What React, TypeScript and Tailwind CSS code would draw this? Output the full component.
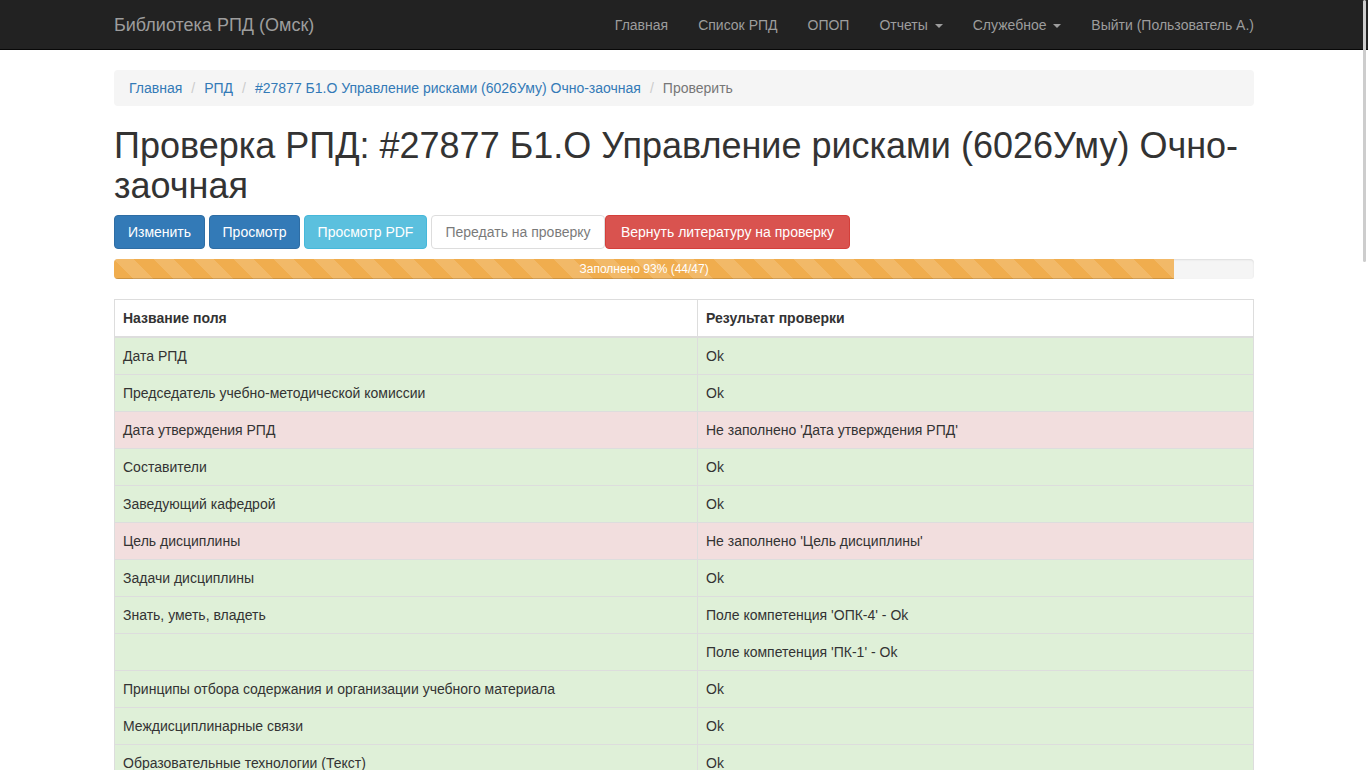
import React from "react";

type Row = {
  name: string;
  result: string;
  bad?: boolean;
};

const rows: Row[] = [
  { name: "Дата РПД", result: "Ok" },
  { name: "Председатель учебно-методической комиссии", result: "Ok" },
  { name: "Дата утверждения РПД", result: "Не заполнено 'Дата утверждения РПД'", bad: true },
  { name: "Составители", result: "Ok" },
  { name: "Заведующий кафедрой", result: "Ok" },
  { name: "Цель дисциплины", result: "Не заполнено 'Цель дисциплины'", bad: true },
  { name: "Задачи дисциплины", result: "Ok" },
  { name: "Знать, уметь, владеть", result: "Поле компетенция 'ОПК-4' - Ok" },
  { name: "", result: "Поле компетенция 'ПК-1' - Ok" },
  { name: "Принципы отбора содержания и организации учебного материала", result: "Ok" },
  { name: "Междисциплинарные связи", result: "Ok" },
  { name: "Образовательные технологии (Текст)", result: "Ok" },
  { name: "Образовательные технологии (Таблица)", result: "Ok" },
  { name: "Место дисциплины в структуре ОПОП", result: "Ok" },
];

const Caret = () => (
  <span className="ml-[3px] inline-block h-0 w-0 border-x-[4px] border-t-[4px] border-x-transparent border-t-[#9d9d9d] align-middle" />
);

const NavLink = ({ children }: { children: React.ReactNode }) => (
  <a className="block px-[15px] py-[15px] text-[14px] leading-[20px] text-[#9d9d9d]">
    {children}
  </a>
);

const Sep = () => <li className="px-[9px] text-[#ccc]">/</li>;

export default function App() {
  return (
    <div
      className="relative h-[770px] overflow-hidden bg-white text-[14px] leading-[20px] text-[#333]"
      style={{ fontFamily: '"Liberation Sans", Arial, sans-serif' }}
    >
      <nav className="h-[50px] border-b border-[#080808] bg-[#222]">
        <div className="mx-auto flex w-[1170px] items-center justify-between px-[15px]">
          <a className="-ml-[15px] block px-[15px] py-[15px] text-[18px] leading-[20px] text-[#9d9d9d]">
            Библиотека РПД (Омск)
          </a>
          <div className="-mr-[15px] flex">
            <NavLink>Главная</NavLink>
            <NavLink>Список РПД</NavLink>
            <NavLink>ОПОП</NavLink>
            <NavLink>
              Отчеты <Caret />
            </NavLink>
            <NavLink>
              Служебное <Caret />
            </NavLink>
            <NavLink>Выйти (Пользователь А.)</NavLink>
          </div>
        </div>
      </nav>

      <div className="mx-auto w-[1170px] px-[15px] pt-[20px]">
        <ol className="flex rounded-[4px] bg-[#f5f5f5] px-[15px] py-[8px]">
          <li className="text-[#337ab7]">Главная</li>
          <Sep />
          <li className="text-[#337ab7]">РПД</li>
          <Sep />
          <li className="text-[#337ab7]">#27877 Б1.О Управление рисками (6026Уму) Очно-заочная</li>
          <Sep />
          <li className="text-[#777]">Проверить</li>
        </ol>

        <h1 className="mt-[20px] mb-[10px] text-[36px] leading-[39.6px] font-normal text-[#333]">
          Проверка РПД: #27877 Б1.О Управление рисками (6026Уму) Очно-заочная
        </h1>

        <div className="mb-[10px] flex">
          <button className="mr-[4px] w-[91px] rounded-[4px] border border-[#2e6da4] bg-[#337ab7] py-[6px] text-white">
            Изменить
          </button>
          <button className="mr-[4px] w-[91px] rounded-[4px] border border-[#2e6da4] bg-[#337ab7] py-[6px] text-white">
            Просмотр
          </button>
          <button className="mr-[4px] w-[123px] rounded-[4px] border border-[#46b8da] bg-[#5bc0de] py-[6px] text-white">
            Просмотр PDF
          </button>
          <button className="w-[174px] rounded-[4px] border border-[#ccc] bg-white py-[6px] text-[#333] opacity-65">
            Передать на проверку
          </button>
          <button className="w-[245px] rounded-[4px] border border-[#d43f3a] bg-[#d9534f] py-[6px] text-white">
            Вернуть литературу на проверку
          </button>
        </div>

        <div className="mb-[20px] h-[20px] overflow-hidden rounded-[4px] bg-[#f5f5f5] shadow-[inset_0_1px_2px_rgba(0,0,0,0.1)]">
          <div className="h-full w-[93%] bg-[#f0ad4e] bg-[linear-gradient(45deg,rgba(255,255,255,.15)_25%,transparent_25%,transparent_50%,rgba(255,255,255,.15)_50%,rgba(255,255,255,.15)_75%,transparent_75%,transparent)] bg-[length:40px_40px] text-center text-[12px] leading-[20px] text-white shadow-[inset_0_-1px_0_rgba(0,0,0,0.15)]">
            Заполнено 93% (44/47)
          </div>
        </div>

        <table className="w-full border-collapse border border-[#ddd]">
          <thead>
            <tr>
              <th className="w-[583px] border border-b-2 border-[#ddd] p-[8px] text-left font-bold">
                Название поля
              </th>
              <th className="border border-b-2 border-[#ddd] p-[8px] text-left font-bold">
                Результат проверки
              </th>
            </tr>
          </thead>
          <tbody>
            {rows.map((row, i) => (
              <tr key={i} className={row.bad ? "bg-[#f2dede]" : "bg-[#dff0d8]"}>
                <td className="h-[37px] border border-[#ddd] p-[8px]">{row.name}</td>
                <td className="border border-[#ddd] p-[8px]">{row.result}</td>
              </tr>
            ))}
          </tbody>
        </table>
      </div>

      {/* overlay scrollbar */}
      <div className="absolute top-0 right-[2px] h-[262px] w-[3px] rounded-[2px] bg-[#cdcdcd]" />
    </div>
  );
}
